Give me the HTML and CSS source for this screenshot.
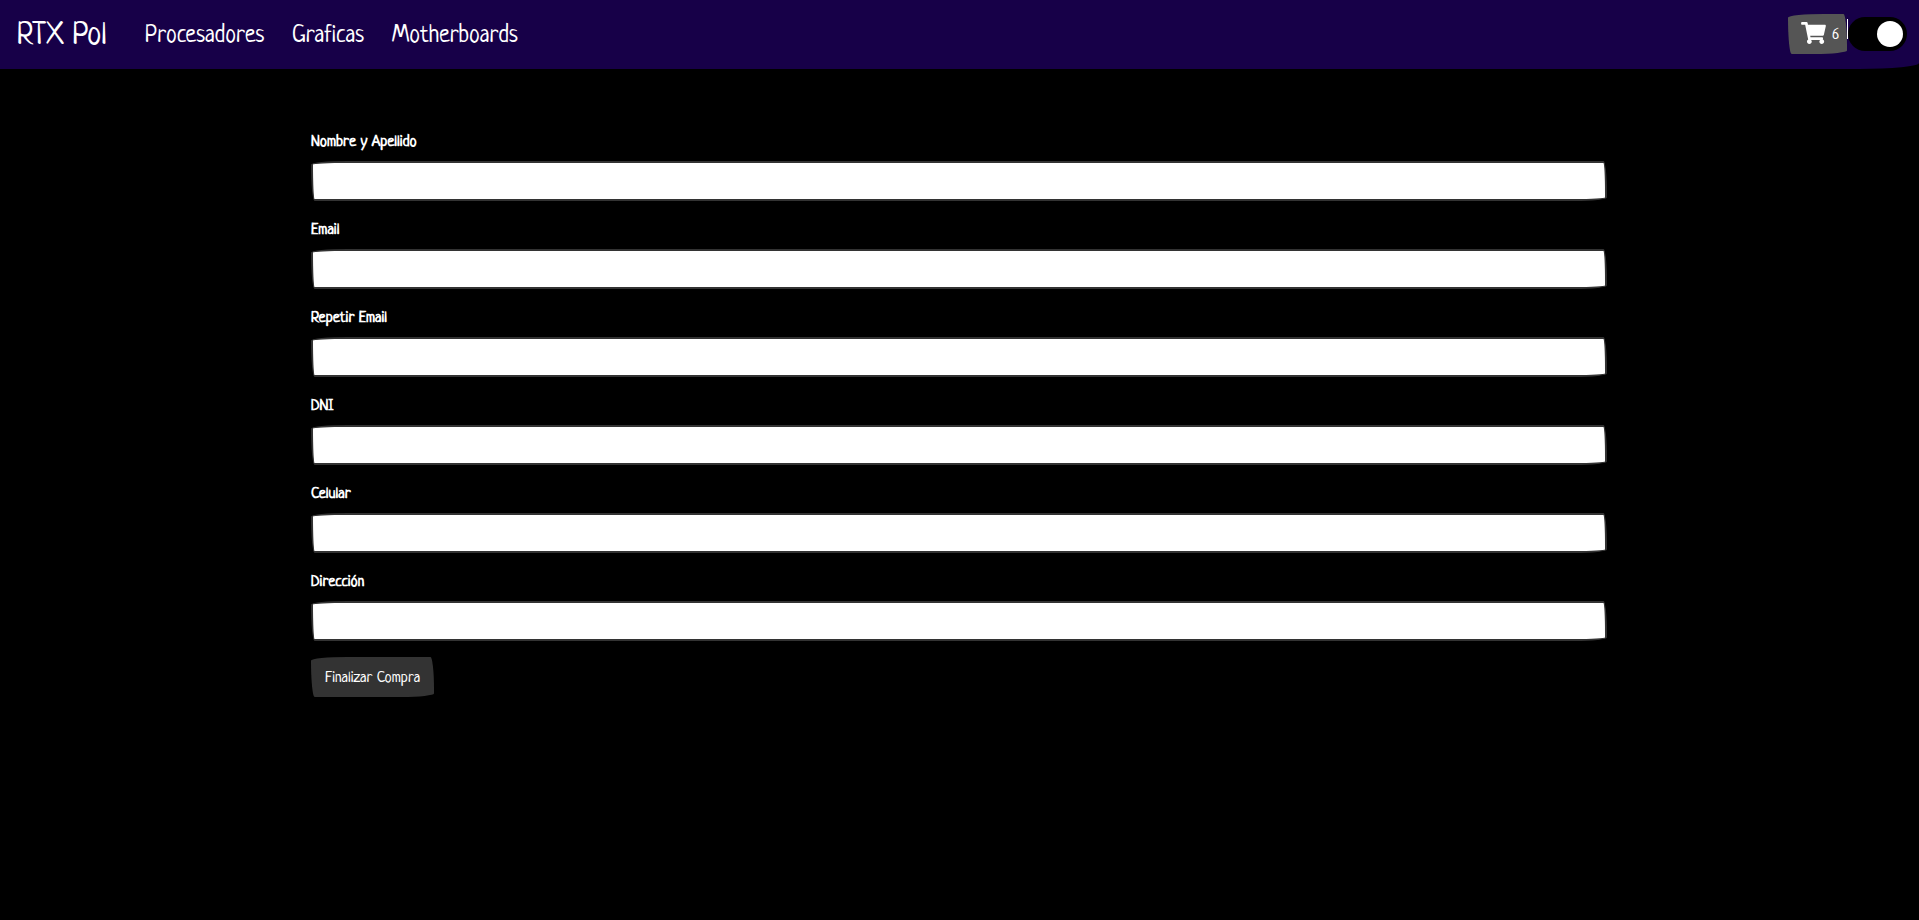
FILE: index.html
```html
<!DOCTYPE html>
<html lang="es">
<head>
<meta charset="utf-8">
<title>RTX Pol</title>
<link rel="stylesheet" href="styles.css">
</head>
<body>
<nav class="navbar">
  <a class="brand">RTX Pol</a>
  <div class="links">
    <a class="link link-proc">Procesadores</a>
    <a class="link link-graf">Graficas</a>
    <a class="link">Motherboards</a>
  </div>
  <div class="actions">
    <button class="btn cart"><svg class="cart-icon" viewBox="0 0 576 512"><path fill="#fff" d="M528.12 301.319l47.273-208C578.806 78.301 567.391 64 551.99 64H159.208l-9.166-44.81C147.758 8.021 137.93 0 126.529 0H24C10.745 0 0 10.745 0 24v16c0 13.255 10.745 24 24 24h69.883l70.248 343.435C147.325 417.1 136 435.222 136 456c0 30.928 25.072 56 56 56s56-25.072 56-56c0-15.674-6.447-29.835-16.824-40h209.647C430.447 426.165 424 440.326 424 456c0 30.928 25.072 56 56 56s56-25.072 56-56c0-22.172-12.888-41.332-31.579-50.405l5.517-24.276c3.413-15.018-8.002-29.319-23.403-29.319H218.117l-6.545-32h293.145c11.206 0 20.92-7.754 23.403-18.681z"/></svg><span class="count">6</span></button>
    <span class="divider"></span>
    <span class="switch"><span class="knob"></span></span>
  </div>
</nav>
<form class="form">
  <label class="field"><span class="label">Nombre y Apellido</span><input class="input" type="text"></label>
  <label class="field"><span class="label">Email</span><input class="input" type="text"></label>
  <label class="field"><span class="label">Repetir Email</span><input class="input" type="text"></label>
  <label class="field"><span class="label">DNI</span><input class="input" type="text"></label>
  <label class="field"><span class="label">Celular</span><input class="input" type="text"></label>
  <label class="field"><span class="label">Dirección</span><input class="input" type="text"></label>
  <button class="btn submit" type="button">Finalizar Compra</button>
</form>
</body>
</html>
```
FILE: styles.css
```css
* { box-sizing: border-box; }
body { margin: 0; min-height: 920px; background: #000; color: #fff; font-family: Neucha, Lato, sans-serif; }
.navbar { display: flex; align-items: center; height: 69px; padding: 0 12px 0 17px; background: #170048; border-radius: 0 0 60px 0 / 0 0 6px 0; }
.brand { width: 128px; padding-top: 3px; font-size: 32px; line-height: 40px; }
.links { display: flex; padding-top: 4px; font-size: 24px; line-height: 30px; }
.link-proc { width: 147px; }
.link-graf { width: 100px; }
.actions { display: flex; align-items: center; margin: -1px 0 0 auto; }
.btn { display: flex; align-items: center; height: 40px; border: 0; color: #fff; font: 16px Neucha, Lato, sans-serif; border-radius: 255px 25px 225px 25px / 25px 225px 25px 255px; }
.cart { width: 59px; padding: 0 0 0 13px; background: #555; }
.cart-icon { width: 25px; height: 22px; margin-top: -3px; }
.count { margin-left: 6px; padding-top: 4px; }
.divider { width: 1px; height: 20px; margin-top: -11px; background: #fff; }
.switch { display: flex; align-items: center; justify-content: flex-end; width: 59px; height: 34px; padding-right: 4px; border-radius: 17px; background: #000; }
.knob { width: 26px; height: 26px; border-radius: 50%; background: #fff; }
.form { width: 1296px; margin: 60px 0 0 311px; }
.field { display: block; height: 88px; }
.label { display: block; height: 32px; padding-top: 2px; font-size: 16px; line-height: 24px; font-weight: 700; }
.input { display: block; width: 100%; height: 40px; padding: 0 12px; background: #fff; border: 2px solid #333; border-radius: 255px 25px 225px 25px / 25px 225px 25px 255px; }
.submit { width: 123px; padding: 4px 0 0 14px; background: #333; }
```
